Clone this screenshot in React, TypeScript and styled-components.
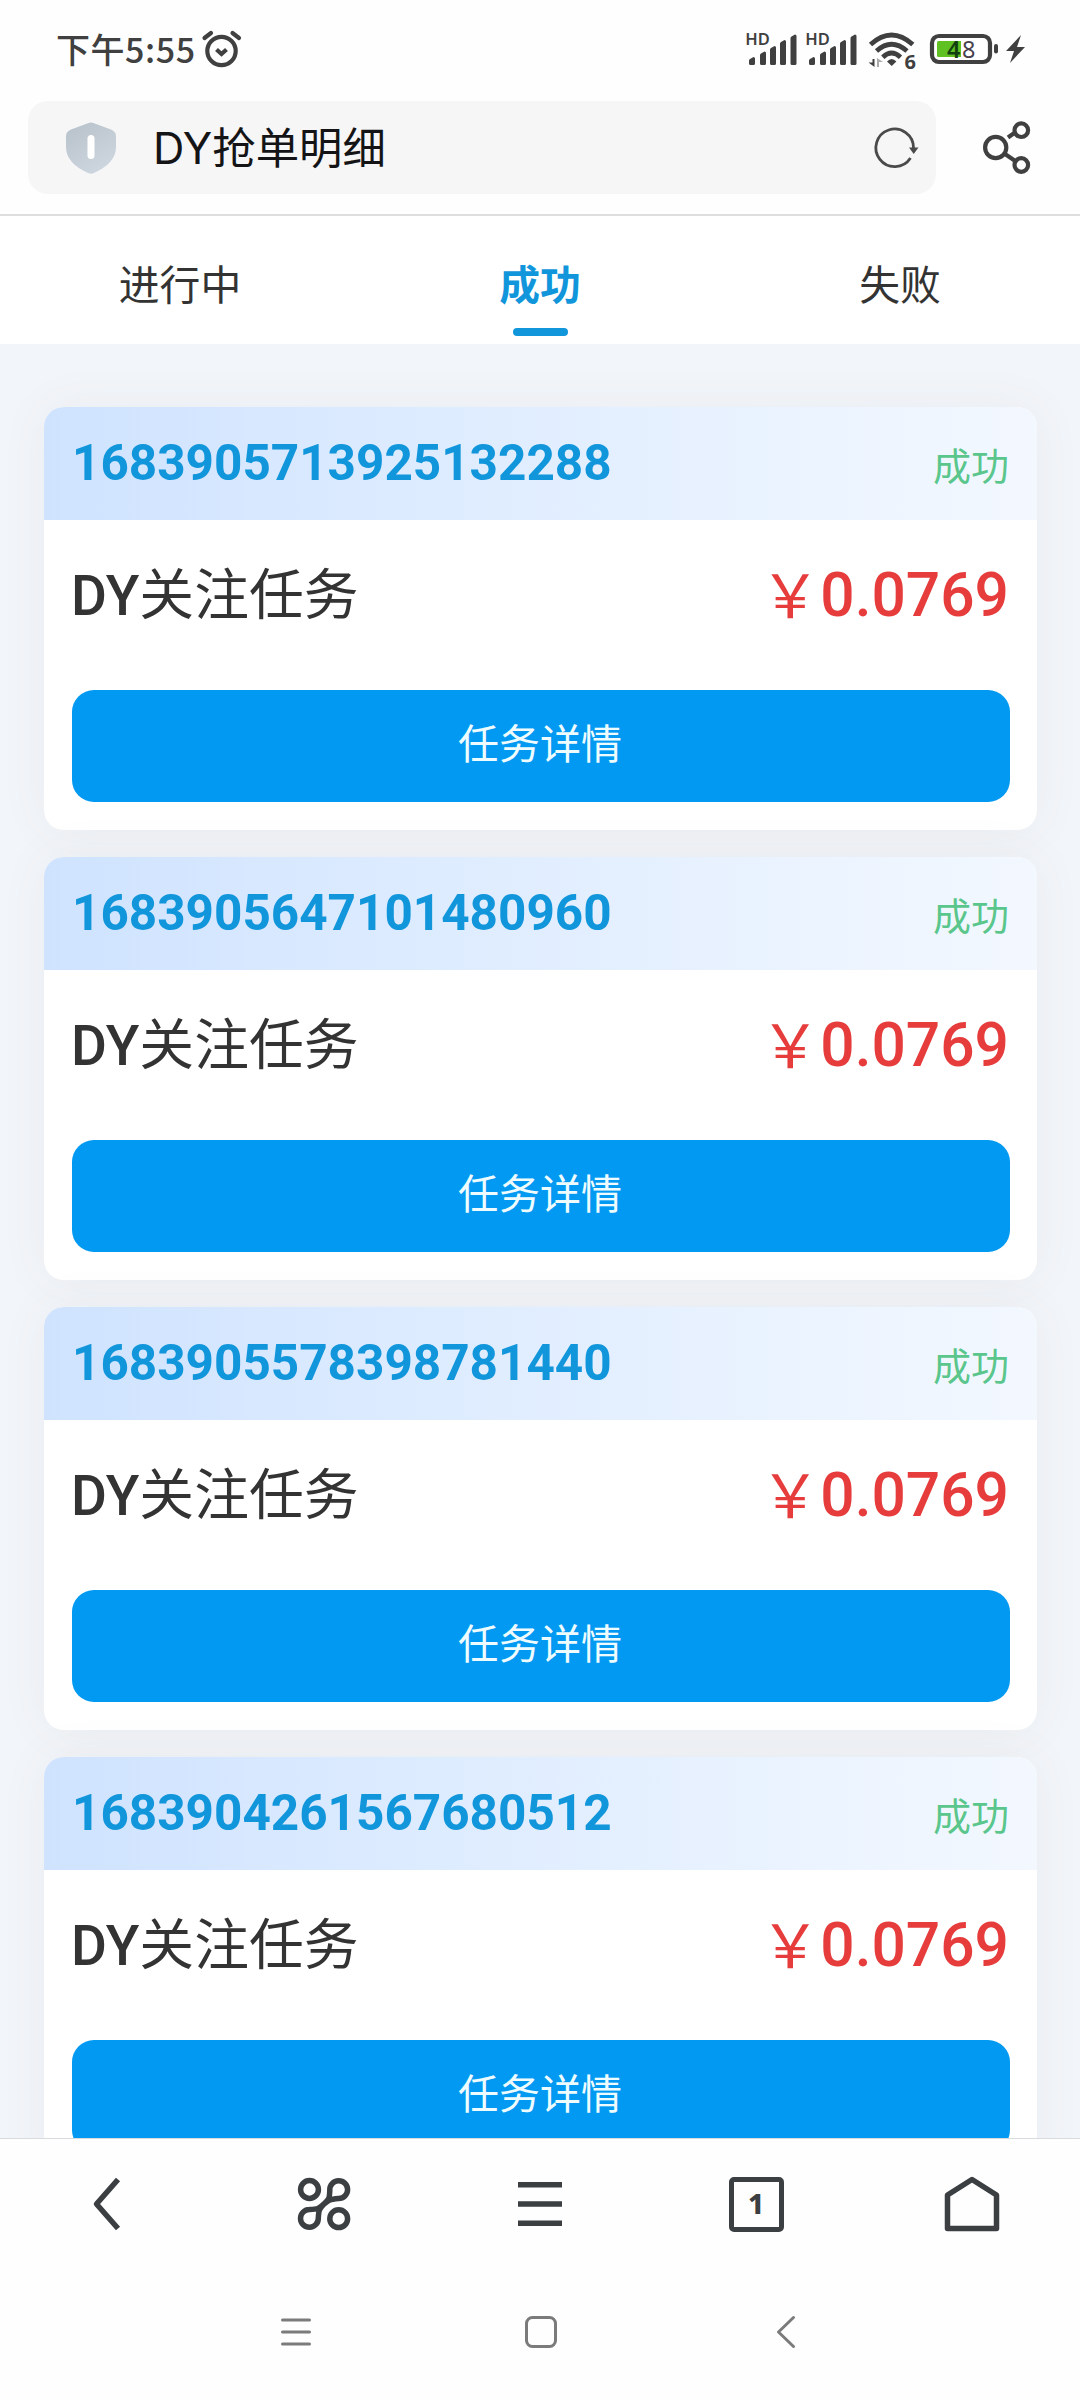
import React from "react";
import styled, { createGlobalStyle } from "styled-components";

const GlobalStyle = createGlobalStyle`
  * { box-sizing: border-box; }
  html, body { margin: 0; padding: 0; background: #fff; }
  button { font: inherit; border: 0; padding: 0; background: none; }
`;

const cjk = `"Noto Sans CJK SC", sans-serif`;
const ink = "#3b3f42";
const statusInk = "#404040";

const Screen = styled.div`
  width: 1080px;
  height: 2400px;
  display: flex;
  flex-direction: column;
  overflow: hidden;
  background: #fefefe;
  font-family: Roboto, ${cjk};
  color: #333;
`;

const StatusBar = styled.header`
  height: 101px;
  flex: none;
  display: flex;
  justify-content: space-between;
  align-items: flex-start;
  padding: 19px 50px 0 56px;
`;

const Clock = styled.div`
  display: flex;
  align-items: center;
  gap: 5px;
  height: 60px;
  font: 500 34px/60px ${cjk};
  letter-spacing: 0.55px;
  color: ${statusInk};
`;

const StatusIcons = styled.div`
  display: flex;
  height: 60px;
  margin-top: 1px;
`;

const AddressRow = styled.div`
  height: 115px;
  flex: none;
  display: flex;
  align-items: flex-start;
  border-bottom: 2px solid #dedede;
  padding-left: 28px;
`;

const AddressBar = styled.div`
  width: 908px;
  height: 93px;
  display: flex;
  align-items: center;
  border-radius: 20px;
  background: #f6f6f7;
  padding: 0 16px 0 38px;
`;

const PageTitle = styled.h1`
  flex: 1;
  margin: 0 0 0 37px;
  font: 400 43.4px/92px Inter, ${cjk};
  color: #141416;
`;

const ShareButton = styled.button`
  height: 93px;
  margin-left: 44px;
  display: flex;
  align-items: center;
`;

const Tabs = styled.nav`
  height: 128px;
  flex: none;
  display: grid;
  grid-template-columns: repeat(3, 1fr);
  background: #fff;
`;

const Tab = styled.button<{ $active?: boolean }>`
  display: flex;
  flex-direction: column;
  align-items: center;
  font: ${(p) => (p.$active ? 700 : 400)} 40.8px/60px ${cjk};
  color: ${(p) => (p.$active ? "#1296db" : "#333")};
  padding-top: 37px;
  &::after {
    content: "";
    width: 55px;
    height: 8px;
    margin-top: 15px;
    border-radius: 4px;
    background: ${(p) => (p.$active ? "#1296db" : "transparent")};
  }
`;

const Orders = styled.main`
  flex: 1;
  min-height: 0;
  overflow: hidden;
  display: flex;
  flex-direction: column;
  gap: 27px;
  padding: 63px 43px 0 44px;
  background: #f2f5f9;
`;

const Card = styled.article`
  flex: none;
  height: 423px;
  border-radius: 20px;
  background: #fff;
  box-shadow: 0 0 50px rgba(100, 85, 85, 0.06);
`;

const CardHead = styled.div`
  height: 113px;
  display: flex;
  align-items: center;
  justify-content: space-between;
  padding: 0 28px;
  border-radius: 20px 20px 0 0;
  background: linear-gradient(90deg, #cfe3ff, #e3efff 55%, #f3f8ff);
`;

const OrderId = styled.span`
  font-weight: 700;
  font-size: 49.5px;
  line-height: 110px;
  padding-bottom: 1px;
  color: #1296db;
`;

const State = styled.span`
  font: 400 38px/113px ${cjk};
  color: #5ac68c;
`;

const CardBody = styled.div`
  padding: 0 27px 0 28px;
`;

const Summary = styled.div`
  height: 170px;
  display: flex;
  justify-content: space-between;
  padding: 0 1px 0 0;
`;

const TaskName = styled.h2`
  display: flex;
  margin: 0 0 0 -1px;
  font: 500 55px/152px Roboto;
  span { font: 400 54.8px/141px ${cjk}; }
`;

const Price = styled.div`
  display: flex;
  font: 500 60.5px/152px Roboto;
  color: #e63c3c;
  span { font: 400 60px/143px ${cjk}; }
`;

const DetailButton = styled.button`
  display: block;
  width: 100%;
  height: 112px;
  border-radius: 22px;
  background: #0199f2;
  color: #eefcff;
  font: 400 41px/103px ${cjk};
  padding: 0 2px 9px 0;
`;

const Toolbar = styled.footer`
  height: 132px;
  flex: none;
  display: grid;
  grid-template-columns: repeat(5, 1fr);
  align-items: center;
  justify-items: center;
  border-top: 1px solid #d9dcdf;
  padding-bottom: 1px;
`;

const ToolButton = styled.button`
  width: 60px;
  height: 60px;
  display: flex;
  align-items: center;
  justify-content: center;
`;

const TabCount = styled(ToolButton)`
  width: 55px;
  height: 55px;
  border: 5.5px solid ${ink};
  border-radius: 5px;
  font: 800 28px/40px "Noto Sans", sans-serif;
  color: ${ink};
  padding-bottom: 3px;
`;

const SystemNav = styled.nav`
  height: 130px;
  flex: none;
  display: flex;
  justify-content: center;
  gap: 185px;
  padding: 32px 0 0 2px;
`;

const NavItem = styled.span`
  width: 60px;
  height: 60px;
  display: flex;
  align-items: center;
  justify-content: center;
`;

const Stroke = styled.svg<{ $c?: string; $w?: number }>`
  display: block;
  fill: none;
  stroke: ${(p) => p.$c ?? ink};
  stroke-width: ${(p) => p.$w ?? 5.5};
`;

const Alarm = () => (
  <Stroke width="42" height="40" viewBox="0 0 42 40" $c={statusInk} $w={4.2} strokeLinecap="round">
    <circle cx="20.5" cy="22" r="14.2" />
    <path d="M3.5 9 10 4M31.5 4 38 9" />
    <path d="m15.5 20.5 5 4.5 5-4.5" strokeLinecap="butt" />
  </Stroke>
);

const bars = [
  [3, 57], [14, 51.5], [24, 46], [34, 40], [44.5, 34.5],
];

const Signal = () => (
  <svg width="60" height="60" viewBox="0 20 60 60" fill={statusInk}>
    <text x="-0.8" y="45" fontFamily="Noto Sans" fontWeight="600" fontSize="16.5">HD</text>
    {bars.map(([x, y]) => (
      <path key={x} d={`M${x} ${y + 3.5} Q${x} ${y + 2.5} ${x + 1} ${y + 2} L${x + 4.5} ${y} Q${x + 6} ${y} ${x + 6} ${y + 1.5} V63.5 Q${x + 6} 65 ${x + 4.5} 65 H${x + 1.5} Q${x} 65 ${x} 63.5Z`} />
    ))}
  </svg>
);

const Wifi = () => (
  <svg width="60" height="60" viewBox="866 20 60 60" fill="none" stroke={statusInk} strokeWidth="4.8">
    <path d="M870.5 44.5Q891.5 25.5 912.8 44.5M876.5 51Q891.5 37.5 907 51M882.8 57.2Q891.5 49 900.5 57.2" />
    <path d="M887 61.5q4.7-5 9.4 0l-4.7 4.5z" fill={statusInk} stroke="none" />
    <path d="M874.5 59v8l-6-4.5h4V59z" fill={statusInk} stroke="none" />
    <path d="M877 67v-9l6 4h-4v5z" fill="#aaa" stroke="none" />
    <text x="904.5" y="69" fontFamily="Noto Sans" fontWeight="700" fontSize="20" fill={statusInk} stroke="none">6</text>
  </svg>
);

const Battery = () => (
  <svg width="104" height="60" viewBox="926 20 104 60">
    <rect x="932" y="36" width="58" height="26" rx="7" fill="#fff" stroke={statusInk} strokeWidth="4.2" />
    <path d="M938.5 41H961V57H938.5Q937 57 937 55.5V42.500Q937 41 938.5 41Z" fill="#5fc122" />
    <text x="947" y="57.500" fontFamily="Noto Sans" fontSize="23.5" fontWeight="600" fill="#123f10">4</text>
    <text x="962" y="57.500" fontFamily="Noto Sans" fontSize="23.5" fill="#49404d">8</text>
    <rect x="994" y="44" width="4" height="9.500" rx="2" fill={statusInk} />
    <path d="m1021 35-15 16h8l-4 12 15-16h-8z" fill={statusInk} />
  </svg>
);

const Shield = () => (
  <svg width="50" height="52" viewBox="0 0 50 52">
    <defs>
      <linearGradient id="shield" x1="0" y1="0" x2="0.6" y2="1">
        <stop offset="0" stopColor="#b7c1ca" />
        <stop offset="1" stopColor="#cdd6df" />
      </linearGradient>
    </defs>
    <path d="M22 1.200Q25 0 28 1.200L45 7.500Q50 9.500 50 14V25Q50 41 28 51Q25 52.500 22 51Q0 41 0 25V14Q0 9.500 5 7.500Z" fill="url(#shield)" />
    <rect x="21.500" y="13" width="7" height="24" rx="3.500" fill="#fff" />
  </svg>
);

const Refresh = () => (
  <Stroke width="50" height="50" viewBox="0 0 50 50" $c="#4a4a4a" $w={2.8}>
    <path d="M40.500 35A18.800 18.800 0 1 1 43.500 25" />
    <path d="M39 24.500h9.500L43.700 31z" fill="#4a4a4a" stroke="none" />
  </Stroke>
);

const Share = () => (
  <Stroke width="52" height="56" viewBox="980 119 52 56" $c="#404040" $w={4.2}>
    <circle cx="995.700" cy="146.500" r="10.600" />
    <circle cx="1021.300" cy="129.200" r="6.800" />
    <circle cx="1021.300" cy="164" r="6.800" />
    <path d="m1008 136.500 7-5M1005 153l11 7.500" />
  </Stroke>
);

const Clover = () => (
  <Stroke width="54" height="54" viewBox="0 0 54 54" $w={5.5}>
    <circle cx="12.500" cy="12.500" r="8.900" />
    <circle cx="41.700" cy="41.700" r="8.900" />
    <path d="M32.800 13A8.900 8.900 0 1 1 41.500 21.500C32 22.500 32.500 22.500 27 27C21.500 31.500 22 32 12.500 32.500A8.900 8.900 0 1 0 21.300 41C21.800 32 22.500 32 27 27C32 22 32.500 22 32.800 13Z" />
  </Stroke>
);

const orders = [
  "1683905713925132288",
  "1683905647101480960",
  "1683905578398781440",
  "1683904261567680512",
];

const OrderCard = ({ id }: { id: string }) => (
  <Card>
    <CardHead>
      <OrderId>{id}</OrderId>
      <State>成功</State>
    </CardHead>
    <CardBody>
      <Summary>
        <TaskName>DY<span>关注任务</span></TaskName>
        <Price><span>￥</span>0.0769</Price>
      </Summary>
      <DetailButton>任务详情</DetailButton>
    </CardBody>
  </Card>
);

export default function App() {
  return (
    <Screen>
      <GlobalStyle />
      <StatusBar>
        <Clock>下午5:55<Alarm /></Clock>
        <StatusIcons>
          <Signal />
          <Signal />
          <Wifi />
          <Battery />
        </StatusIcons>
      </StatusBar>
      <AddressRow>
        <AddressBar>
          <Shield />
          <PageTitle>DY抢单明细</PageTitle>
          <Refresh />
        </AddressBar>
        <ShareButton aria-label="分享"><Share /></ShareButton>
      </AddressRow>
      <Tabs>
        <Tab>进行中</Tab>
        <Tab $active>成功</Tab>
        <Tab>失败</Tab>
      </Tabs>
      <Orders>
        {orders.map((id) => <OrderCard key={id} id={id} />)}
      </Orders>
      <Toolbar>
        <ToolButton>
          <Stroke width="60" height="60" viewBox="0 0 60 60">
            <path d="M40 5.500 18.500 30 40 54.500" strokeLinejoin="round" />
          </Stroke>
        </ToolButton>
        <ToolButton><Clover /></ToolButton>
        <ToolButton>
          <Stroke width="44" height="60" viewBox="0 0 44 60">
            <path d="M0 10.700H44M0 30H44M0 49.300H44" />
          </Stroke>
        </ToolButton>
        <TabCount>1</TabCount>
        <ToolButton>
          <Stroke width="60" height="60" viewBox="0 0 60 60" strokeLinejoin="round">
            <path d="M30 5.500 54.500 21V54.500H5.500V21Z" />
          </Stroke>
        </ToolButton>
      </Toolbar>
      <SystemNav>
        <NavItem>
          <Stroke width="30" height="30" viewBox="0 0 30 30" $c="#7b7b7b" $w={3} strokeLinecap="round">
            <path d="M1.500 3H28.500M1.500 15H28.500M1.500 27H28.500" />
          </Stroke>
        </NavItem>
        <NavItem>
          <Stroke width="34" height="34" viewBox="0 0 34 34" $c="#7b7b7b" $w={3}>
            <rect x="2.500" y="2.500" width="29" height="29" rx="6" />
          </Stroke>
        </NavItem>
        <NavItem>
          <Stroke width="20" height="34" viewBox="0 0 20 34" $c="#7b7b7b" $w={3} strokeLinecap="round" strokeLinejoin="round">
            <path d="M17.500 2.500 2.500 17 17.500 31.500" />
          </Stroke>
        </NavItem>
      </SystemNav>
    </Screen>
  );
}
